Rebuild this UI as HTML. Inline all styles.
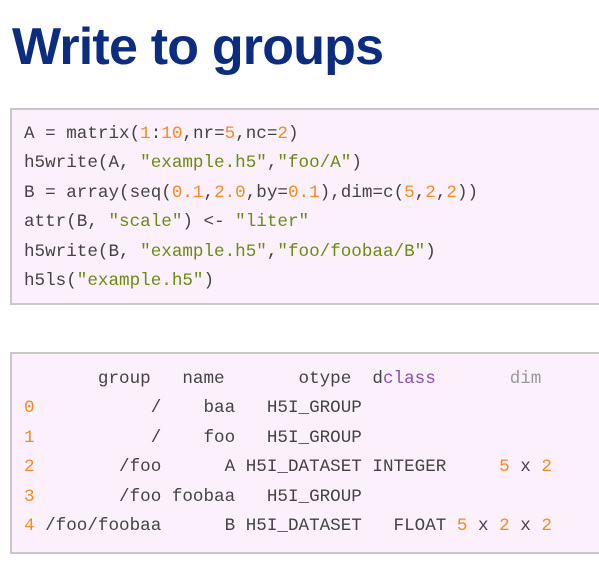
<!DOCTYPE html>
<html><head><style>
body{margin:0;width:599px;height:583px;background:#fff;overflow:hidden;font-family:"Liberation Sans",sans-serif}
h1{position:absolute;left:12px;top:17px;margin:0;font-size:52px;font-weight:bold;color:#0c2c80;letter-spacing:-0.8px}
.box{position:absolute;left:10px;width:600px;background:#fcf0fc;border:2px solid #c8c8c8;box-sizing:border-box}
pre{margin:0;font-family:"Liberation Mono",monospace;font-size:17.6px;line-height:29.4px;color:#444;position:absolute;left:12px;white-space:pre}
.n{color:#f58a1f}.s{color:#6b8c12}.p{color:#8a4fb0}.g{color:#999}
</style></head><body>
<h1>Write to groups</h1>
<div class="box" style="top:108px;height:197px"><pre style="top:10px">A = matrix(<span class="n">1</span>:<span class="n">10</span>,nr=<span class="n">5</span>,nc=<span class="n">2</span>)
h5write(A, <span class="s">"example.h5"</span>,<span class="s">"foo/A"</span>)
B = array(seq(<span class="n">0.1</span>,<span class="n">2.0</span>,by=<span class="n">0.1</span>),dim=c(<span class="n">5</span>,<span class="n">2</span>,<span class="n">2</span>))
attr(B, <span class="s">"scale"</span>) &lt;- <span class="s">"liter"</span>
h5write(B, <span class="s">"example.h5"</span>,<span class="s">"foo/foobaa/B"</span>)
h5ls(<span class="s">"example.h5"</span>)</pre></div>
<div class="box" style="top:352px;height:202px"><pre style="top:11px">       group   name       otype  d<span class="p">class</span>       <span class="g">dim</span>
<span class="n">0</span>           /    baa   H5I_GROUP
<span class="n">1</span>           /    foo   H5I_GROUP
<span class="n">2</span>        /foo      A H5I_DATASET INTEGER     <span class="n">5</span> x <span class="n">2</span>
<span class="n">3</span>        /foo foobaa   H5I_GROUP
<span class="n">4</span> /foo/foobaa      B H5I_DATASET   FLOAT <span class="n">5</span> x <span class="n">2</span> x <span class="n">2</span></pre></div>
</body></html>
